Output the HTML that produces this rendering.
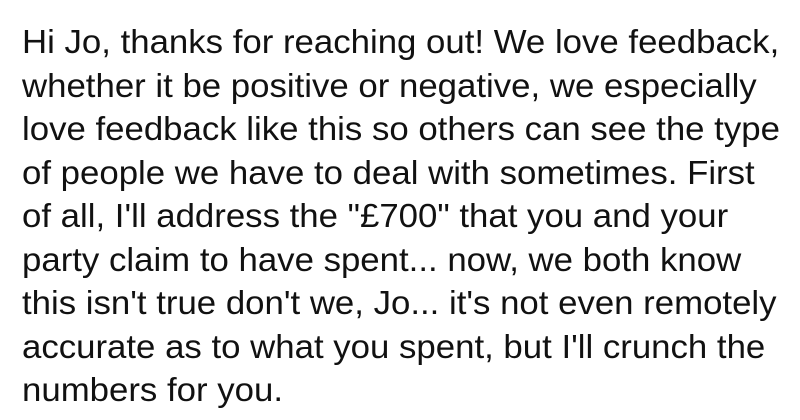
<!DOCTYPE html>
<html><head><meta charset="utf-8"><style>
html,body{margin:0;padding:0;background:#fff;}
body{width:800px;height:420px;overflow:hidden;position:relative;}
.t{position:absolute;left:22px;top:20px;font-family:"Liberation Sans",sans-serif;font-size:33px;line-height:43.5px;color:#111;white-space:nowrap;transform:scaleX(1.054);transform-origin:0 0;}
</style></head><body>
<div class="t">
<div>Hi Jo, thanks for reaching out! We love feedback,</div>
<div>whether it be positive or negative, we especially</div>
<div>love feedback like this so others can see the type</div>
<div>of people we have to deal with sometimes. First</div>
<div>of all, I'll address the "£700" that you and your</div>
<div>party claim to have spent... now, we both know</div>
<div>this isn't true don't we, Jo... it's not even remotely</div>
<div>accurate as to what you spent, but I'll crunch the</div>
<div>numbers for you.</div>
</div>
</body></html>
